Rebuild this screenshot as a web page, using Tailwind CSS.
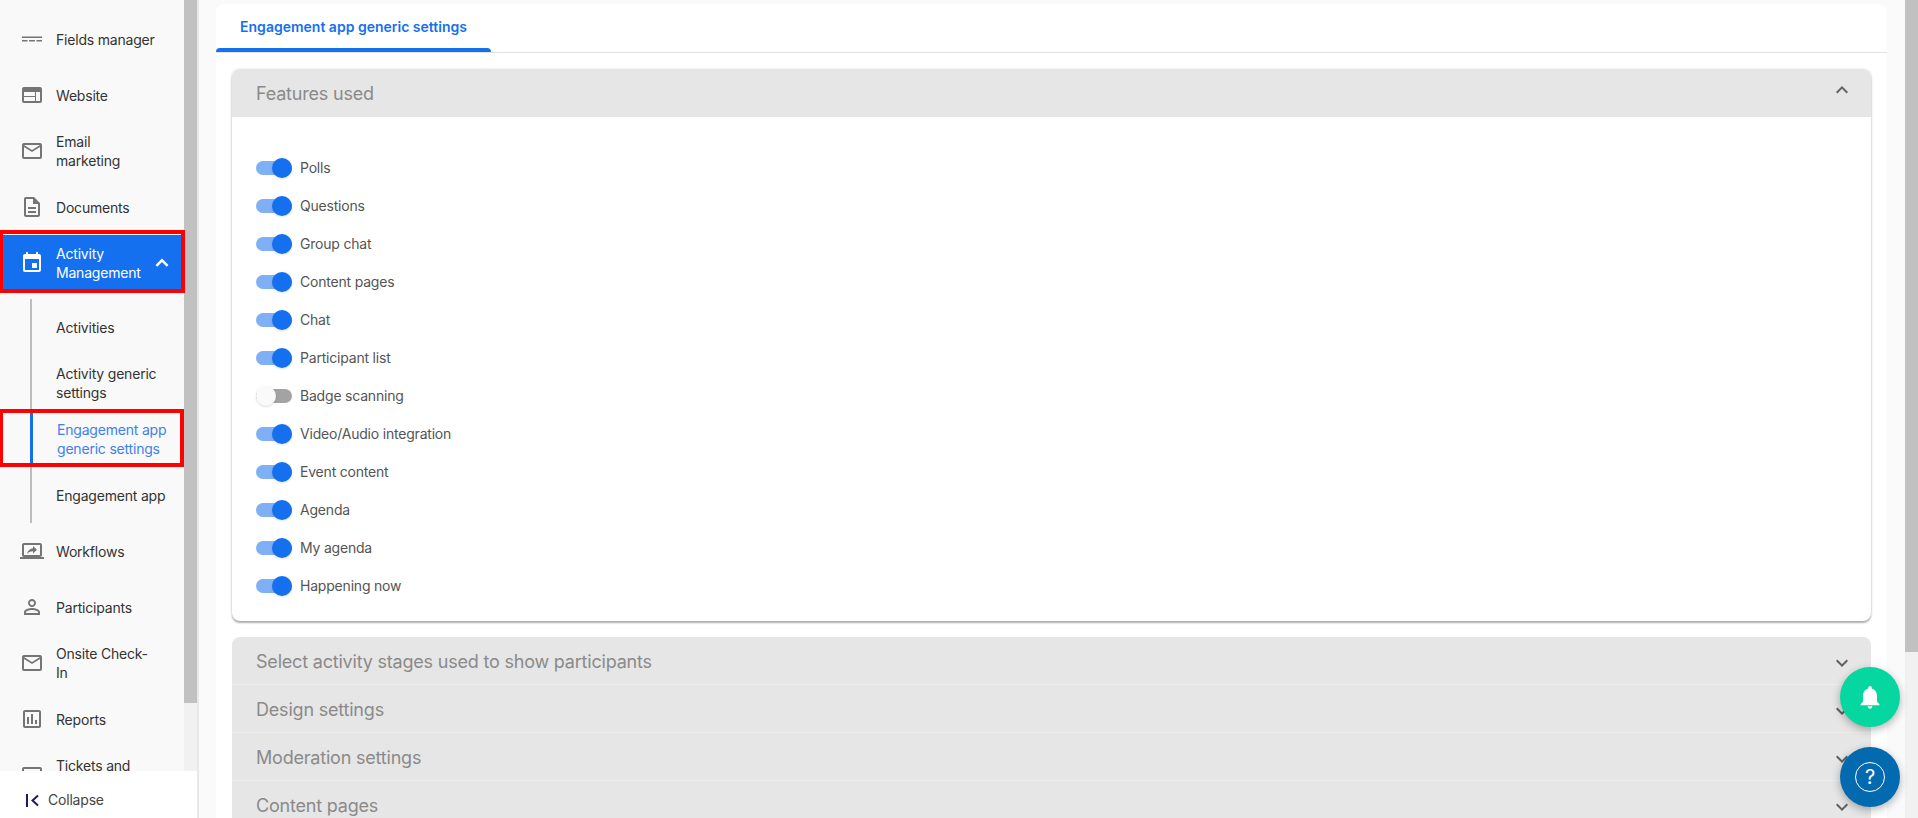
<!DOCTYPE html>
<html lang="en">
<head>
    <meta charset="UTF-8">
    <title>Engagement app generic settings</title>
    <script src="https://cdn.jsdelivr.net/npm/@tailwindcss/browser@4"></script>
</head>
<body class="h-screen overflow-hidden bg-[#fafafa] font-['Inter','Noto_Sans',sans-serif] text-sm tracking-[-0.2px] text-[#333]">
<div class="relative flex h-[818px] w-[1918px] overflow-hidden">

    <!-- Sidebar -->
    <aside class="relative flex h-full w-[199px] shrink-0 border-r-2 border-[#e8e8e8] bg-[#f9f9f9]">
        <nav class="w-[184px] shrink-0 overflow-y-clip pt-[11px] leading-[19px]">
            <a class="flex h-14 items-center gap-3 pl-5">
                <svg class="size-6 shrink-0 fill-[#757575]" viewBox="0 0 24 24"><path d="M2 9.5h20v1.4H2zM2 13h5.5v1.4H2zM9 13h6v1.4H9zM16.5 13H22v1.4h-5.5z"/></svg>
                <span class="w-[104px]">Fields manager</span>
            </a>
            <a class="flex h-14 items-center gap-3 pl-5">
                <svg class="size-6 shrink-0 fill-[#757575]" viewBox="0 0 24 24"><path d="M20 4H4c-1.1 0-1.99.9-1.99 2L2 18c0 1.1.9 2 2 2h16c1.1 0 2-.9 2-2V6c0-1.1-.9-2-2-2zm-5 14H4v-4h11v4zm0-5H4V9h11v4zm5 5h-4V9h4v9z"/></svg>
                <span class="w-[104px]">Website</span>
            </a>
            <a class="flex h-14 items-center gap-3 pl-5">
                <svg class="size-6 shrink-0 fill-[#757575]" viewBox="0 0 24 24"><path d="M20 4H4c-1.1 0-1.99.9-1.99 2L2 18c0 1.1.9 2 2 2h16c1.1 0 2-.9 2-2V6c0-1.1-.9-2-2-2zm0 14H4V8l8 5 8-5v10zm-8-7L4 6h16l-8 5z"/></svg>
                <span class="w-[90px]">Email marketing</span>
            </a>
            <a class="flex h-14 items-center gap-3 pl-5">
                <svg class="size-6 shrink-0 fill-[#757575]" viewBox="0 0 24 24"><path d="M8 16h8v2H8zm0-4h8v2H8zm6-10H6c-1.1 0-2 .9-2 2v16c0 1.1.89 2 1.99 2H18c1.1 0 2-.9 2-2V8l-6-6zm4 18H6V4h7v5h5v11z"/></svg>
                <span class="w-[104px]">Documents</span>
            </a>

            <!-- Active group, red box is an annotation over the row -->
            <a class="relative flex h-14 items-center gap-3 bg-[#1570ef] pl-5 text-white">
                <svg class="size-6 shrink-0 fill-white" viewBox="0 0 24 24"><path d="M17 12h-5v5h5v-5zM16 1v2H8V1H6v2H5c-1.11 0-1.99.9-1.99 2L3 19c0 1.1.89 2 2 2h14c1.1 0 2-.9 2-2V5c0-1.1-.9-2-2-2h-1V1h-2zm3 18H5V8h14v11z"/></svg>
                <span class="w-[92px]">Activity Management</span>
                <svg class="-ml-[10px] size-6 shrink-0 fill-white" viewBox="0 0 24 24"><path d="M12 7.5l-6.5 6.5 1.8 1.8L12 11.1l4.7 4.7 1.8-1.8z"/></svg>
                <span class="absolute -top-[5px] -bottom-[2px] left-0 -right-px border-[4px] border-l-[3px] border-[#ff0000]"></span>
            </a>

            <div class="relative mt-2 ml-[30px] border-l-2 border-[#bdbdbd]">
                <a class="flex h-14 items-center pl-6">Activities</a>
                <a class="flex h-14 items-center pl-6"><span class="w-[118px]">Activity generic settings</span></a>
                <a class="flex h-14 items-center pl-[25px] text-[#3f7ff0]"><span class="w-[118px]">Engagement app generic settings</span></a>
                <a class="flex h-14 items-center pl-6">Engagement app</a>
                <span class="absolute top-[112px] -left-[2px] h-[52px] w-[3px] bg-[#1570ef]"></span>
                <span class="absolute top-[110px] -left-[32px] h-[58px] w-[184px] border-[4px] border-l-[3px] border-[#ff0000]"></span>
            </div>

            <a class="flex h-14 items-center gap-3 pl-5">
                <svg class="size-6 shrink-0 fill-[#757575]" viewBox="0 0 24 24"><path d="M20 18c1.1 0 1.99-.9 1.99-2L22 6c0-1.11-.9-2-2-2H4c-1.11 0-2 .89-2 2v10c0 1.1.89 2 2 2H0v2h24v-2h-4zM4 16V6h16v10.01L4 16zm9-6.87c-3.89.54-5.44 3.2-6 5.87 1.39-1.87 3.22-2.72 6-2.72v2.19l4-3.74L13 7v2.13z"/></svg>
                <span class="w-[104px]">Workflows</span>
            </a>
            <a class="flex h-14 items-center gap-3 pl-5">
                <svg class="size-6 shrink-0 fill-[#757575]" viewBox="0 0 24 24"><path d="M12 5.9c1.16 0 2.1.94 2.1 2.1s-.94 2.1-2.1 2.1S9.9 9.16 9.9 8s.94-2.1 2.1-2.1m0 9c2.97 0 6.1 1.46 6.1 2.1v1.1H5.9V17c0-.64 3.13-2.1 6.1-2.1M12 4C9.79 4 8 5.79 8 8s1.79 4 4 4 4-1.79 4-4-1.79-4-4-4zm0 9c-2.67 0-8 1.34-8 4v3h16v-3c0-2.66-5.33-4-8-4z"/></svg>
                <span class="w-[104px]">Participants</span>
            </a>
            <a class="flex h-14 items-center gap-3 pl-5">
                <svg class="size-6 shrink-0 fill-[#757575]" viewBox="0 0 24 24"><path d="M20 4H4c-1.1 0-1.99.9-1.99 2L2 18c0 1.1.9 2 2 2h16c1.1 0 2-.9 2-2V6c0-1.1-.9-2-2-2zm0 14H4V8l8 5 8-5v10zm-8-7L4 6h16l-8 5z"/></svg>
                <span class="w-[100px]">Onsite Check-In</span>
            </a>
            <a class="flex h-14 items-center gap-3 pl-5">
                <svg class="size-6 shrink-0 fill-[#757575]" viewBox="0 0 24 24"><path d="M19 3H5c-1.1 0-2 .9-2 2v14c0 1.1.9 2 2 2h14c1.1 0 2-.9 2-2V5c0-1.1-.9-2-2-2zm0 16H5V5h14v14zM7 10h2v7H7zm4-3h2v10h-2zm4 6h2v4h-2z"/></svg>
                <span class="w-[104px]">Reports</span>
            </a>
            <a class="flex h-14 items-center gap-3 pl-5">
                <svg class="size-6 shrink-0 fill-[#757575]" viewBox="0 0 24 24"><path d="M20 4H4c-1.1 0-2 .9-2 2v12c0 1.1.9 2 2 2h16c1.1 0 2-.9 2-2V6c0-1.1-.9-2-2-2zm0 14H4V6h16v12z"/></svg>
                <span class="w-[90px]">Tickets and badges</span>
            </a>
        </nav>

        <div class="h-full w-[13px] shrink-0 bg-[#f1f1f1]">
            <div class="h-[703px] bg-[#c1c1c1]"></div>
        </div>

        <div class="absolute bottom-0 left-0 flex h-[47px] w-[199px] items-center gap-[9px] border-r-2 border-[#e8e8e8] bg-white pt-[11px] pl-[26px] text-[#444]">
            <svg class="size-[13px] shrink-0" viewBox="0 0 13 13" fill="none"><path d="M1 0v13" stroke="#1e1b5e" stroke-width="2"/><path d="M12 1.5 6.5 6.5l5.5 5" stroke="#1e1b5e" stroke-width="2"/></svg>
            <span>Collapse</span>
        </div>
    </aside>

    <!-- Main -->
    <main class="min-w-0 flex-1 overflow-hidden pt-1 pr-[18px] pl-[17px]">
        <div class="rounded-t-lg bg-white">
            <div class="flex h-[49px] border-b border-[#e3e3e3]">
                <div class="relative flex h-12 w-[275px] items-center justify-center tracking-normal pb-[3px] font-semibold text-[#1570ef]">
                    Engagement app generic settings
                    <span class="absolute right-0 bottom-0 left-0 h-1 rounded-t-sm bg-[#1570ef]"></span>
                </div>
            </div>

            <div class="px-4 pt-4">
                <section class="rounded-lg bg-white shadow-[0_2px_2px_rgba(0,0,0,0.3),0_0_3px_rgba(0,0,0,0.12)]">
                    <div class="flex h-12 items-center justify-between rounded-t-lg bg-[#e6e6e6] pr-[17px] pl-6 text-lg text-[#8a8a8a]">
                        <span class="pt-0.5">Features used</span>
                        <svg class="-mt-1.5 size-6 fill-[#616161]" viewBox="0 0 24 24"><path d="M12 8l-6 6 1.41 1.41L12 10.83l4.59 4.58L18 14z"/></svg>
                    </div>
                    <ul class="pt-8 pb-4 pl-6 text-[#555]">
                        <li class="flex h-[38px] items-center gap-2">
                            <span class="relative h-3.5 w-9 rounded-full bg-[#7fb0f5]"><span class="absolute -top-[3px] right-0 size-5 rounded-full bg-[#1570ef] shadow"></span></span>Polls
                        </li>
                        <li class="flex h-[38px] items-center gap-2">
                            <span class="relative h-3.5 w-9 rounded-full bg-[#7fb0f5]"><span class="absolute -top-[3px] right-0 size-5 rounded-full bg-[#1570ef] shadow"></span></span>Questions
                        </li>
                        <li class="flex h-[38px] items-center gap-2">
                            <span class="relative h-3.5 w-9 rounded-full bg-[#7fb0f5]"><span class="absolute -top-[3px] right-0 size-5 rounded-full bg-[#1570ef] shadow"></span></span>Group chat
                        </li>
                        <li class="flex h-[38px] items-center gap-2">
                            <span class="relative h-3.5 w-9 rounded-full bg-[#7fb0f5]"><span class="absolute -top-[3px] right-0 size-5 rounded-full bg-[#1570ef] shadow"></span></span>Content pages
                        </li>
                        <li class="flex h-[38px] items-center gap-2">
                            <span class="relative h-3.5 w-9 rounded-full bg-[#7fb0f5]"><span class="absolute -top-[3px] right-0 size-5 rounded-full bg-[#1570ef] shadow"></span></span>Chat
                        </li>
                        <li class="flex h-[38px] items-center gap-2">
                            <span class="relative h-3.5 w-9 rounded-full bg-[#7fb0f5]"><span class="absolute -top-[3px] right-0 size-5 rounded-full bg-[#1570ef] shadow"></span></span>Participant list
                        </li>
                        <li class="flex h-[38px] items-center gap-2">
                            <span class="relative h-3.5 w-9 rounded-full bg-[#a3a3a3]"><span class="absolute -top-[3px] left-0 size-5 rounded-full bg-[#fafafa] shadow"></span></span>Badge scanning
                        </li>
                        <li class="flex h-[38px] items-center gap-2">
                            <span class="relative h-3.5 w-9 rounded-full bg-[#7fb0f5]"><span class="absolute -top-[3px] right-0 size-5 rounded-full bg-[#1570ef] shadow"></span></span>Video/Audio integration
                        </li>
                        <li class="flex h-[38px] items-center gap-2">
                            <span class="relative h-3.5 w-9 rounded-full bg-[#7fb0f5]"><span class="absolute -top-[3px] right-0 size-5 rounded-full bg-[#1570ef] shadow"></span></span>Event content
                        </li>
                        <li class="flex h-[38px] items-center gap-2">
                            <span class="relative h-3.5 w-9 rounded-full bg-[#7fb0f5]"><span class="absolute -top-[3px] right-0 size-5 rounded-full bg-[#1570ef] shadow"></span></span>Agenda
                        </li>
                        <li class="flex h-[38px] items-center gap-2">
                            <span class="relative h-3.5 w-9 rounded-full bg-[#7fb0f5]"><span class="absolute -top-[3px] right-0 size-5 rounded-full bg-[#1570ef] shadow"></span></span>My agenda
                        </li>
                        <li class="flex h-[38px] items-center gap-2">
                            <span class="relative h-3.5 w-9 rounded-full bg-[#7fb0f5]"><span class="absolute -top-[3px] right-0 size-5 rounded-full bg-[#1570ef] shadow"></span></span>Happening now
                        </li>
                    </ul>
                </section>

                <section class="mt-4 overflow-hidden rounded-t-lg text-lg text-[#8a8a8a]">
                    <div class="flex h-12 items-center justify-between border-b border-[#ededed] bg-[#e6e6e6] pr-[17px] pl-6">
                        <span class="pt-0.5">Select activity stages used to show participants</span>
                        <svg class="mt-1 size-6 fill-[#616161]" viewBox="0 0 24 24"><path d="M16.59 8.59L12 13.17 7.41 8.59 6 10l6 6 6-6z"/></svg>
                    </div>
                    <div class="flex h-12 items-center justify-between border-b border-[#ededed] bg-[#e6e6e6] pr-[17px] pl-6">
                        <span class="pt-0.5">Design settings</span>
                        <svg class="mt-1 size-6 fill-[#616161]" viewBox="0 0 24 24"><path d="M16.59 8.59L12 13.17 7.41 8.59 6 10l6 6 6-6z"/></svg>
                    </div>
                    <div class="flex h-12 items-center justify-between border-b border-[#ededed] bg-[#e6e6e6] pr-[17px] pl-6">
                        <span class="pt-0.5">Moderation settings</span>
                        <svg class="mt-1 size-6 fill-[#616161]" viewBox="0 0 24 24"><path d="M16.59 8.59L12 13.17 7.41 8.59 6 10l6 6 6-6z"/></svg>
                    </div>
                    <div class="flex h-12 items-center justify-between border-b border-[#ededed] bg-[#e6e6e6] pr-[17px] pl-6">
                        <span class="pt-0.5">Content pages</span>
                        <svg class="mt-1 size-6 fill-[#616161]" viewBox="0 0 24 24"><path d="M16.59 8.59L12 13.17 7.41 8.59 6 10l6 6 6-6z"/></svg>
                    </div>
                </section>
            </div>
        </div>
    </main>

    <!-- Page scrollbar -->
    <div class="h-full w-[13px] shrink-0 bg-[#f1f1f1]">
        <div class="h-[652px] bg-[#c1c1c1]"></div>
    </div>

    <!-- Floating buttons -->
    <div class="absolute top-[667px] right-[18px] flex flex-col gap-5">
        <button class="flex size-[60px] items-center justify-center rounded-full bg-[#06d6a0] shadow-[0_3px_8px_rgba(0,0,0,0.3)]">
            <svg class="size-7 fill-white" viewBox="0 0 24 24"><path d="M12 22c1.1 0 2-.9 2-2h-4c0 1.1.89 2 2 2zm6-6v-5c0-3.07-1.64-5.64-4.5-6.32V4c0-.83-.67-1.5-1.5-1.5s-1.5.67-1.5 1.5v.68C7.63 5.36 6 7.92 6 11v5l-2 2v1h16v-1l-2-2z"/></svg>
        </button>
        <button class="flex size-[60px] items-center justify-center rounded-full bg-[#036aaf] shadow-[0_3px_8px_rgba(0,0,0,0.3)]">
            <span class="flex size-[30px] items-center justify-center rounded-full border-[1.5px] border-white text-xl leading-none text-white">?</span>
        </button>
    </div>
</div>
</body>
</html>
